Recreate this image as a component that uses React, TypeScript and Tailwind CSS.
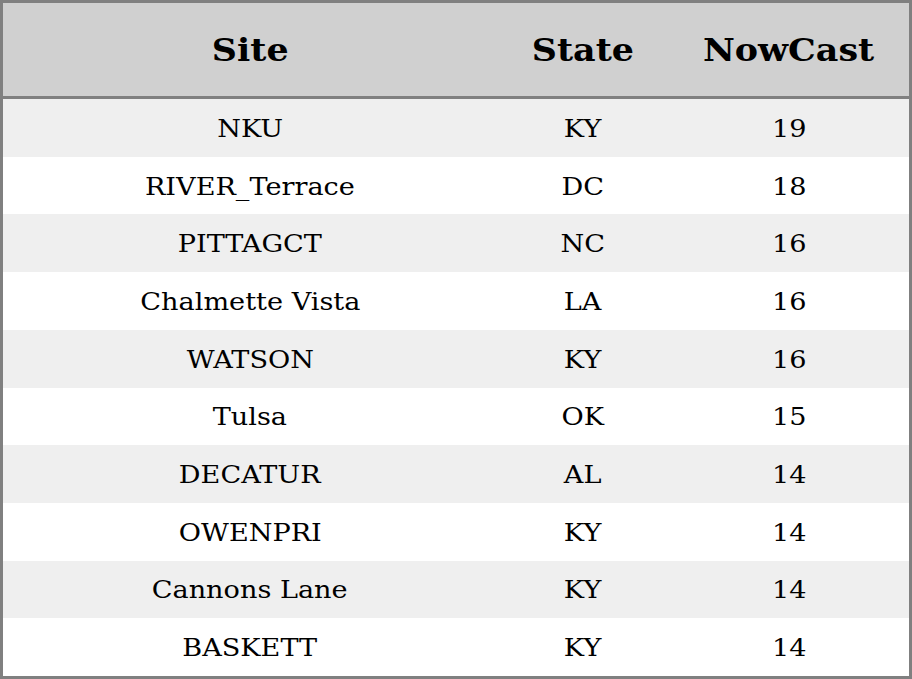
import React from 'react'

const rows = [
  ['NKU', 'KY', '19'],
  ['RIVER_Terrace', 'DC', '18'],
  ['PITTAGCT', 'NC', '16'],
  ['Chalmette Vista', 'LA', '16'],
  ['WATSON', 'KY', '16'],
  ['Tulsa', 'OK', '15'],
  ['DECATUR', 'AL', '14'],
  ['OWENPRI', 'KY', '14'],
  ['Cannons Lane', 'KY', '14'],
  ['BASKETT', 'KY', '14'],
]

function Cell({ children, head }: { children: React.ReactNode; head?: boolean }) {
  return (
    <div className="text-center">
      <span className={head ? 'inline-block scale-x-[1.09]' : 'inline-block scale-x-[1.13]'}>{children}</span>
    </div>
  )
}

export default function App() {
  return (
    <div className="h-[679px] w-[912px] border-[3px] border-[#808080] bg-white flex flex-col text-black font-['DejaVu_Serif',serif]">
      <div className="h-[96px] shrink-0 grid grid-cols-[494px_172px_240px] items-center bg-[#d0d0d0] border-b-[3px] border-[#808080] text-[32px] font-bold">
        <Cell head>Site</Cell>
        <Cell head>State</Cell>
        <Cell head>NowCast</Cell>
      </div>
      <div className="flex-1 flex flex-col">
        {rows.map((r, i) => (
          <div
            key={i}
            className={`flex-1 grid grid-cols-[494px_172px_240px] items-center text-[24px] pt-[2px] ${i % 2 === 0 ? 'bg-[#efefef]' : 'bg-white'}`}
          >
            <Cell>{r[0]}</Cell>
            <Cell>{r[1]}</Cell>
            <Cell>{r[2]}</Cell>
          </div>
        ))}
      </div>
    </div>
  )
}
